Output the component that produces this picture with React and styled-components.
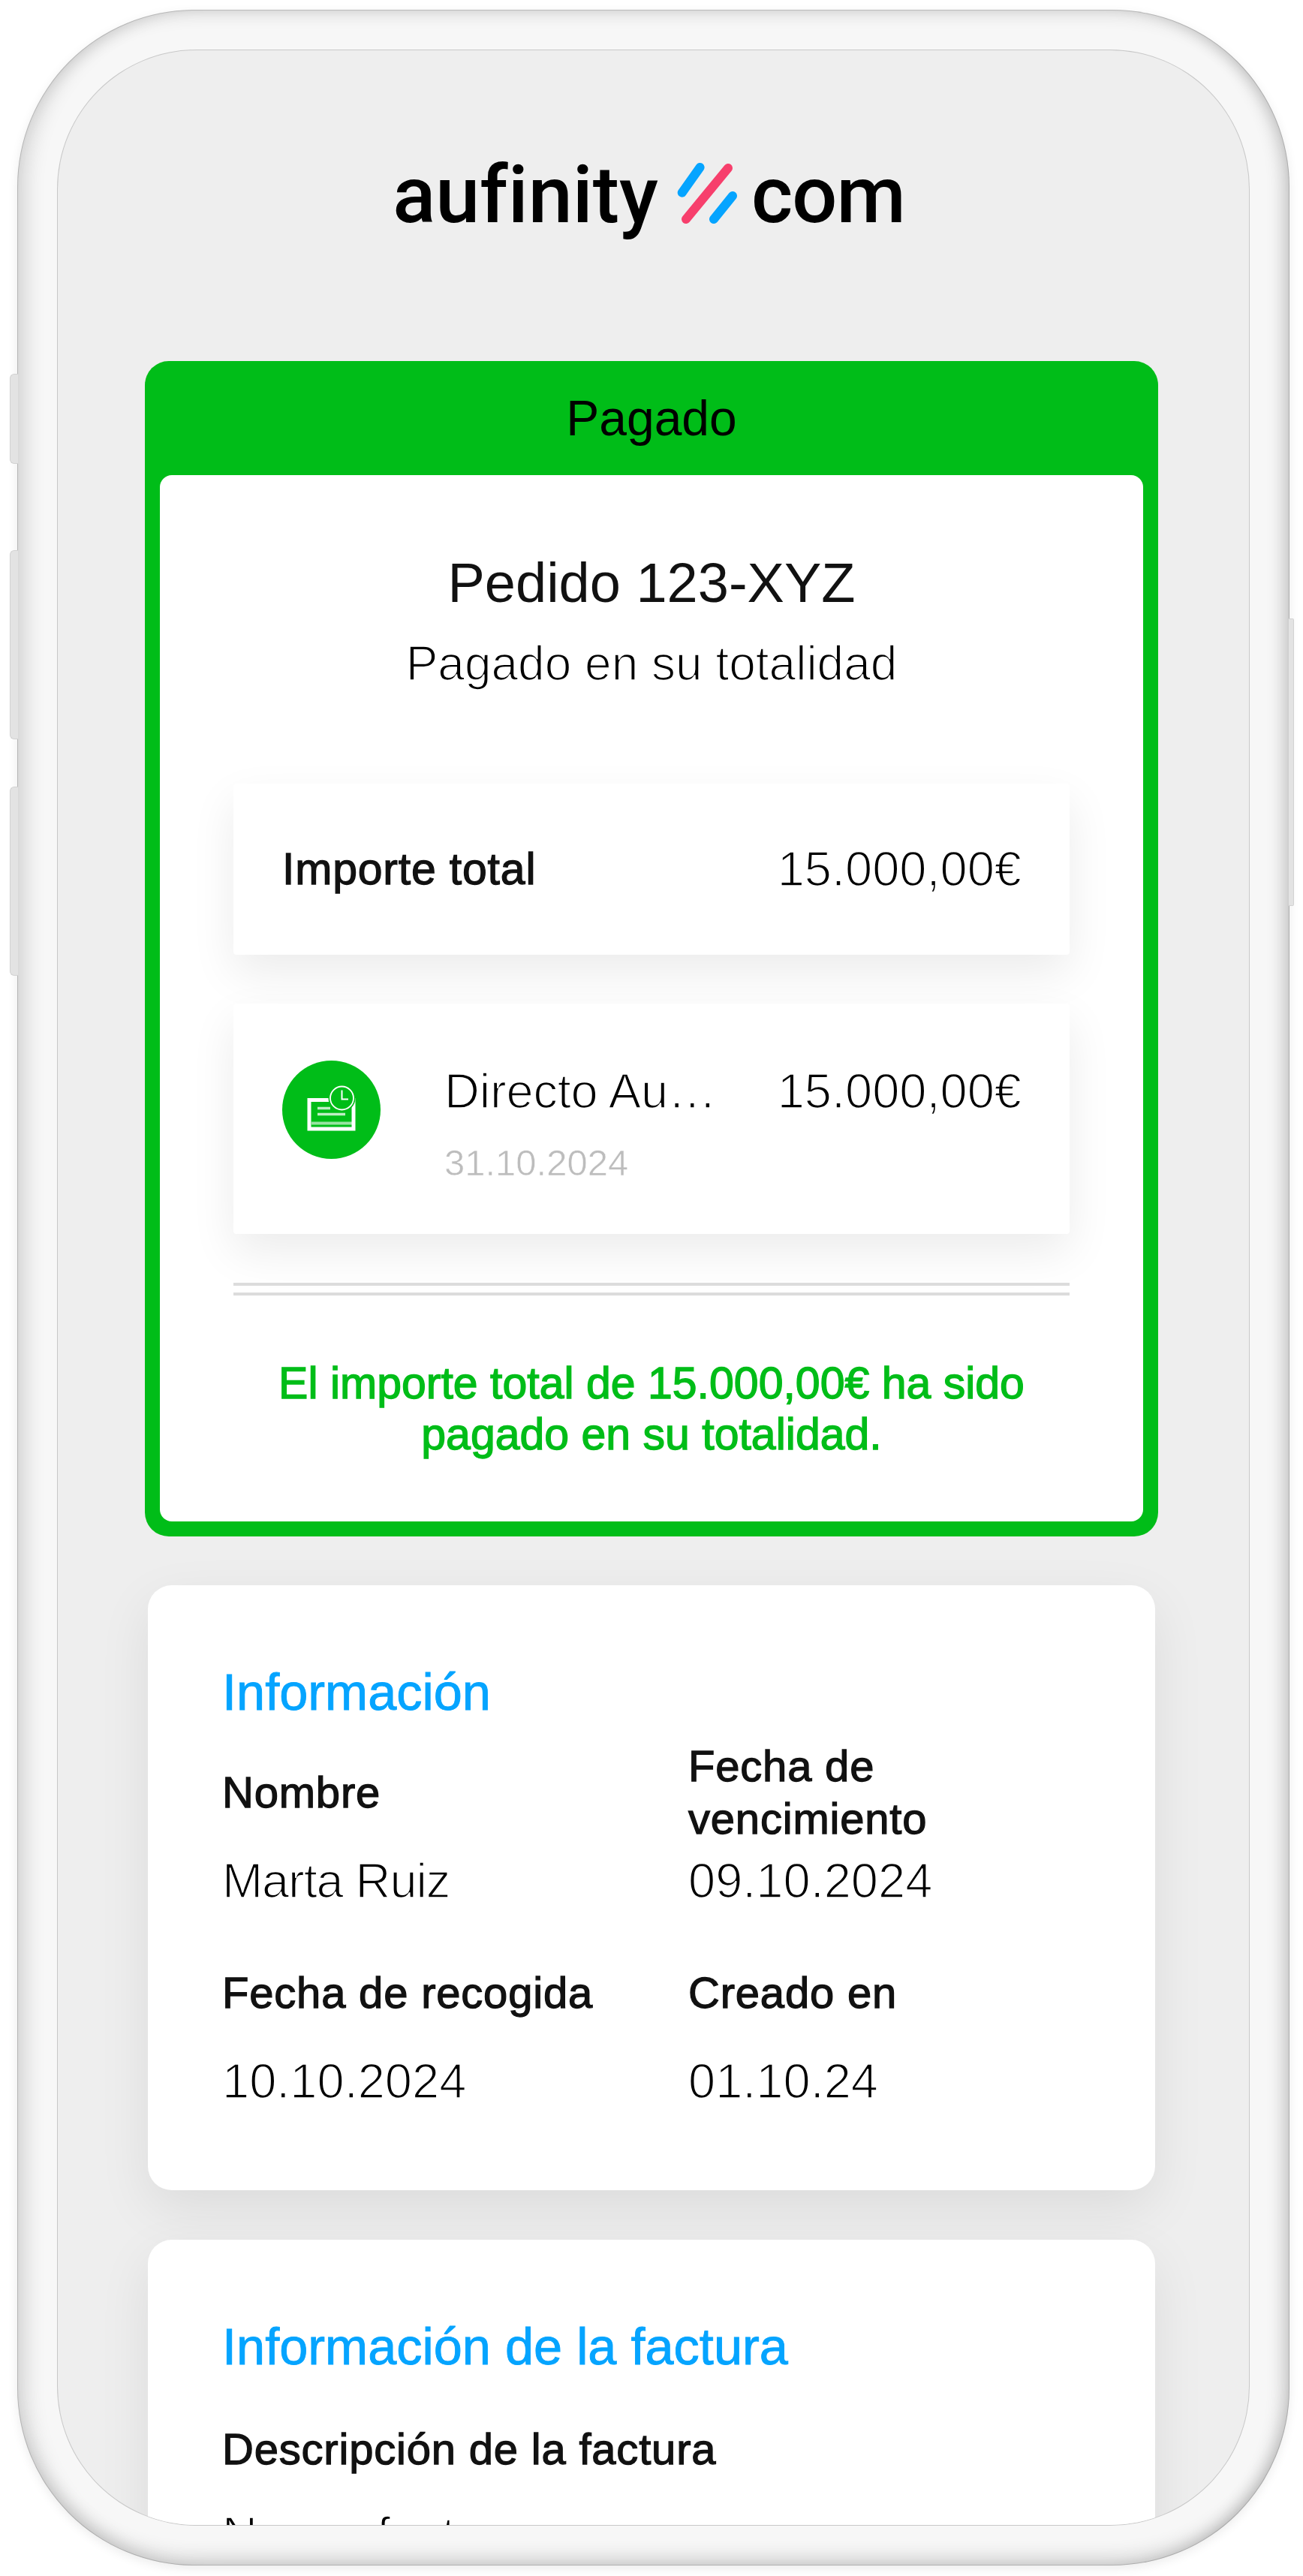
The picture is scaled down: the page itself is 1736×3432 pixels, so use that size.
import styled, { createGlobalStyle } from 'styled-components';

const GREEN = '#00bd18';
const BLUE = '#05a4ff';
const PINK = '#f73f6c';

const GlobalStyle = createGlobalStyle`
  html, body {
    margin: 0;
    background: #fff;
  }
  * {
    box-sizing: border-box;
  }
`;

const Page = styled.div`
  width: 1736px;
  height: 3432px;
  padding: 13px 18px 14px 23px;
  font-family: 'Liberation Sans', Arial, sans-serif;
  color: #111;
  overflow: hidden;
`;

const Phone = styled.div`
  position: relative;
  height: 100%;
  padding: 54px;
  border-radius: 236px;
  background: #f7f7f7;
  box-shadow:
    inset 26px 0 26px -14px rgba(0, 0, 0, 0.13),
    inset -22px 0 22px -14px rgba(0, 0, 0, 0.2),
    inset 0 22px 22px -16px rgba(0, 0, 0, 0.12),
    inset 0 -24px 24px -14px rgba(0, 0, 0, 0.16),
    inset 0 0 0 1px #d2d2d2,
    0 4px 14px rgba(0, 0, 0, 0.08);
`;

const SideButton = styled.div`
  position: absolute;
  top: ${(p) => p.$top}px;
  height: ${(p) => p.$height}px;
  ${(p) => (p.$right ? 'right: -6px; width: 7px;' : 'left: -10px; width: 11px;')}
  border-radius: ${(p) => (p.$right ? '0 2px 2px 0' : '6px 0 0 6px')};
  background: #e3e3e3;
  border: 1px solid #d2d2d2;
  ${(p) => (p.$right ? 'border-left: 0;' : 'border-right: 0;')}
`;

const Screen = styled.div`
  height: 100%;
  border-radius: 185px;
  background: #eeeeee;
  overflow: hidden;
  box-shadow: 0 0 0 1px #c8c8c8;
`;

const Header = styled.header`
  height: 414px;
  padding: 130px 12px 0 0;
  display: flex;
  justify-content: center;
  align-items: flex-start;
  font-family: Roboto, sans-serif;
  font-weight: 500;
  font-size: 106px;
  line-height: 126px;
  font-variant-ligatures: none;
  color: #000;
`;

const LogoWord = styled.span`
  letter-spacing: ${(p) => p.$spacing || 0}px;
`;

const LogoMark = styled.svg`
  width: 90px;
  height: 90px;
  margin: 18px 10px 0 24px;
  flex: none;
`;

const Column = styled.div`
  padding-right: 5px;
  display: flex;
  flex-direction: column;
  align-items: center;
`;

const StatusCard = styled.section`
  width: 1350px;
  height: 1566px;
  flex: none;
  padding: 0 20px 20px;
  display: flex;
  flex-direction: column;
  border-radius: 32px;
  background: ${GREEN};
`;

const StatusBar = styled.div`
  height: 152px;
  flex: none;
  display: flex;
  align-items: center;
  justify-content: center;
  font-size: 66px;
  color: #000;
`;

const StatusBody = styled.div`
  flex: 1;
  padding: 104px 98px 0;
  display: flex;
  flex-direction: column;
  border-radius: 16px;
  background: #fff;
`;

const OrderTitle = styled.h1`
  margin: 0;
  font-size: 74px;
  font-weight: 400;
  line-height: 80px;
  text-align: center;
`;

const OrderSubtitle = styled.p`
  margin: 27px 0 0;
  font-size: 64px;
  line-height: 80px;
  text-align: center;
  color: #000;
  -webkit-text-stroke: 1.7px #fff;
`;

const AmountRow = styled.div`
  height: ${(p) => p.$height}px;
  margin-top: ${(p) => p.$top}px;
  padding: 0 64px 0 65px;
  display: flex;
  align-items: ${(p) => p.$align || 'center'};
  flex: none;
  background: #fff;
  border-radius: 4px;
  box-shadow: 0 24px 60px rgba(0, 0, 0, 0.08);
`;

const StrongLabel = styled.span`
  font-size: 59px;
  line-height: 70px;
  letter-spacing: 0.8px;
  -webkit-text-stroke: 1.3px #111;
`;

const Amount = styled.span`
  margin-left: auto;
  font-size: 65px;
  line-height: 80px;
  color: #000;
  -webkit-text-stroke: 1.7px #fff;
`;

const MethodIcon = styled.svg`
  width: 131px;
  height: 131px;
  flex: none;
  margin-top: 76px;
  margin-right: 85px;
`;

const MethodText = styled.div`
  width: 372px;
  flex: none;
  padding-top: 77px;
`;

const MethodName = styled.div`
  font-size: 65px;
  line-height: 80px;
  white-space: nowrap;
  color: #000;
  letter-spacing: -0.2px;
  -webkit-text-stroke: 1.7px #fff;
`;

const MethodDate = styled.div`
  margin-top: 25px;
  font-size: 49px;
  line-height: 60px;
  color: #bdbdbd;
  -webkit-text-stroke: 0.6px #fff;
`;

const MethodAmount = styled(Amount)`
  margin-top: 77px;
`;

const DoubleRule = styled.div`
  height: 17px;
  margin-top: 65px;
  flex: none;
  border-top: 4px solid #dcdcdc;
  border-bottom: 4px solid #dcdcdc;
`;

const PaidNote = styled.p`
  margin: 83px -40px 0;
  font-size: 59px;
  line-height: 68px;
  text-align: center;
  color: ${GREEN};
  -webkit-text-stroke: 1.4px ${GREEN};
`;

const InfoCard = styled.section`
  width: 1342px;
  flex: none;
  height: ${(p) => p.$height}px;
  margin-top: ${(p) => p.$top}px;
  padding: 103px 99px 0;
  border-radius: 32px;
  background: #fff;
  box-shadow: 0 24px 70px rgba(0, 0, 0, 0.08);
`;

const CardTitle = styled.h2`
  margin: 0;
  font-size: 68.5px;
  font-weight: 400;
  line-height: 80px;
  color: ${BLUE};
  -webkit-text-stroke: 0.9px ${BLUE};
`;

const InfoGrid = styled.div`
  margin-top: 23px;
  display: grid;
  grid-template-columns: 621px 1fr;
  row-gap: 74px;
`;

const Field = styled.div`
  display: flex;
  flex-direction: column;
`;

const FieldLabel = styled.div`
  min-height: ${(p) => p.$min || 70}px;
  display: flex;
  align-items: center;
  font-size: 58px;
  line-height: 70px;
  letter-spacing: 0.8px;
  -webkit-text-stroke: 1.3px #111;
`;

const FieldValue = styled.div`
  margin-top: ${(p) => p.$top}px;
  font-size: 65px;
  line-height: 80px;
  letter-spacing: ${(p) => (p.$tight ? '-1.1px' : '0')};
  color: #000;
  -webkit-text-stroke: 1.7px #fff;
`;

const InvoiceLabel = styled(FieldLabel)`
  margin-top: 61px;
`;

export default function App() {
  return (
    <Page>
      <GlobalStyle />
      <Phone>
        <SideButton $top={485} $height={120} />
        <SideButton $top={720} $height={252} />
        <SideButton $top={1035} $height={252} />
        <SideButton $right $top={811} $height={383} />
        <Screen>
          <Header>
            <LogoWord>aufinity</LogoWord>
            <LogoMark viewBox="0 0 90 90" fill="none" strokeLinecap="round" strokeWidth="12">
              <path d="M31.6 8 L7.7 41.7" stroke={BLUE} />
              <path d="M69 9 L13 77" stroke={PINK} />
              <path d="M75 46 L50 77" stroke={BLUE} />
            </LogoMark>
            <LogoWord $spacing={-1}>com</LogoWord>
          </Header>
          <Column>
            <StatusCard>
              <StatusBar>Pagado</StatusBar>
              <StatusBody>
                <OrderTitle>Pedido 123-XYZ</OrderTitle>
                <OrderSubtitle>Pagado en su totalidad</OrderSubtitle>
                <AmountRow $height={228} $top={120}>
                  <StrongLabel>Importe total</StrongLabel>
                  <Amount>15.000,00€</Amount>
                </AmountRow>
                <AmountRow $height={307} $top={65} $align="flex-start">
                  <MethodIcon viewBox="0 0 131 131">
                    <circle cx="65.5" cy="65.5" r="65.5" fill={GREEN} />
                    <rect x="36" y="52.5" width="59" height="38.5" fill="none" stroke="#fff" strokeWidth="5" />
                    <path d="M47 63.5H64M47 71.5H84" stroke="#fff" strokeWidth="3.5" opacity="0.75" />
                    <path d="M39 83.5H93" stroke="#fff" strokeWidth="4" opacity="0.6" />
                    <circle cx="79.5" cy="50" r="18" fill={GREEN} />
                    <circle cx="79.5" cy="50" r="15.5" fill="none" stroke="#fff" strokeWidth="1.8" />
                    <path d="M79.5 39.5V51.5H88" fill="none" stroke="#fff" strokeWidth="2" />
                  </MethodIcon>
                  <MethodText>
                    <MethodName>Directo Au…</MethodName>
                    <MethodDate>31.10.2024</MethodDate>
                  </MethodText>
                  <MethodAmount>15.000,00€</MethodAmount>
                </AmountRow>
                <DoubleRule />
                <PaidNote>
                  El importe total de 15.000,00€ ha sido
                  <br />
                  pagado en su totalidad.
                </PaidNote>
              </StatusBody>
            </StatusCard>
            <InfoCard $height={806} $top={65}>
              <CardTitle>Información</CardTitle>
              <InfoGrid>
                <Field>
                  <FieldLabel $min={140}>Nombre</FieldLabel>
                  <FieldValue $top={8} $tight>Marta Ruiz</FieldValue>
                </Field>
                <Field>
                  <FieldLabel $min={140}>
                    Fecha de
                    <br />
                    vencimiento
                  </FieldLabel>
                  <FieldValue $top={8}>09.10.2024</FieldValue>
                </Field>
                <Field>
                  <FieldLabel>Fecha de recogida</FieldLabel>
                  <FieldValue $top={43}>10.10.2024</FieldValue>
                </Field>
                <Field>
                  <FieldLabel>Creado en</FieldLabel>
                  <FieldValue $top={43}>01.10.24</FieldValue>
                </Field>
              </InfoGrid>
            </InfoCard>
            <InfoCard $height={560} $top={66}>
              <CardTitle>Información de la factura</CardTitle>
              <InvoiceLabel>Descripción de la factura</InvoiceLabel>
              <FieldValue $top={39}>Nueva factura</FieldValue>
            </InfoCard>
          </Column>
        </Screen>
      </Phone>
    </Page>
  );
}
